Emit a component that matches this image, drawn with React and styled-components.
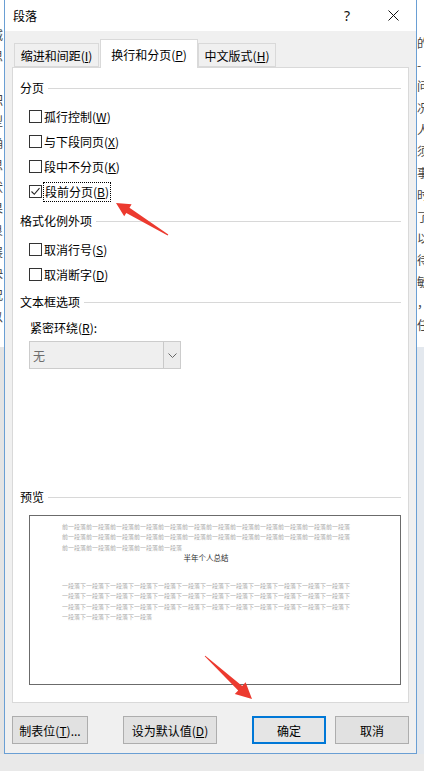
import React from 'react';
import styled, { createGlobalStyle } from 'styled-components';

const Global = createGlobalStyle`
  html, body { margin: 0; padding: 0; }
  body {
    background: #e9e9e9;
    font-family: "Noto Sans CJK SC", "Noto Sans", sans-serif;
    font-size: 12px;
    color: #000;
    overflow: hidden;
  }
`;

const Page = styled.div`
  position: relative;
  width: 424px;
  height: 771px;
  display: flex;
  flex-direction: column;
  background: #e9e9e9;
`;

const TopRow = styled.div`
  display: flex;
  height: 754px;
`;

const Strip = styled.div`
  width: ${p => p.$w}px;
  flex: none;
  display: flex;
  flex-direction: column;
  overflow: hidden;
`;

const DocPart = styled.div`
  height: 347px;
  flex: none;
  background: #fff;
  box-sizing: border-box;
  padding-top: ${p => p.$pt}px;
  display: flex;
  flex-direction: column;
  align-items: ${p => (p.$side === 'left' ? 'flex-end' : 'flex-start')};
  overflow: hidden;
`;

const DocChar = styled.div`
  flex: none;
  width: 13px;
  height: 21.7px;
  line-height: 21.7px;
  font-size: 12px;
  color: #444;
`;

const StripLower = styled.div`
  flex: 1;
  background: ${p => p.$bg};
`;

const Dialog = styled.div`
  width: 413px;
  flex: none;
  box-sizing: border-box;
  border: 1px solid #6a9fd4;
  border-top: none;
  background: #f0f0f0;
  display: flex;
  flex-direction: column;
`;

const TitleBar = styled.div`
  height: 31px;
  flex: none;
  background: #fff;
  display: flex;
  align-items: center;
  padding-left: 8px;
`;

const Title = styled.div`
  flex: 1;
  font-size: 12px;
  line-height: 16px;
`;

const TitleButton = styled.div`
  width: 46px;
  height: 31px;
  display: flex;
  align-items: center;
  justify-content: center;
  font-family: "Noto Sans", sans-serif;
  font-size: 14px;
  color: #111;
`;

const TabStrip = styled.div`
  height: 36px;
  flex: none;
  display: flex;
  align-items: flex-end;
  padding-left: 9px;
`;

const Tab = styled.div`
  position: relative;
  box-sizing: border-box;
  width: ${p => p.$w}px;
  height: ${p => (p.$active ? 29 : 24)}px;
  margin-bottom: ${p => (p.$active ? -1 : 0)}px;
  margin-right: ${p => (p.$active ? 0 : 1)}px;
  z-index: ${p => (p.$active ? 1 : 0)};
  padding-top: ${p => (p.$active ? 7 : 4)}px;
  border: 1px solid #d9d9d9;
  border-bottom: ${p => (p.$active ? 'none' : '1px solid #d9d9d9')};
  background: ${p => (p.$active ? '#fff' : '#f0f0f0')};
  text-align: center;
  font-size: 12px;
  line-height: 16px;
  white-space: nowrap;
`;

const Panel = styled.div`
  height: 636px;
  flex: none;
  margin: 0 7px;
  box-sizing: border-box;
  border: 1px solid #d9d9d9;
  background: #fff;
  padding: 0 7px;
  display: flex;
  flex-direction: column;
`;

const SectionHeader = styled.div`
  height: 16px;
  margin-top: ${p => p.$mt}px;
  display: flex;
  align-items: center;
  font-size: 12px;
  line-height: 16px;
  white-space: nowrap;
`;

const Rule = styled.div`
  flex: 1;
  height: 1px;
  margin-left: 4px;
  margin-top: 1px;
  background: #d8d8d8;
`;

const CheckList = styled.div`
  margin-top: ${p => p.$mt}px;
  margin-left: 9px;
  display: flex;
  flex-direction: column;
`;

const CheckRow = styled.div`
  height: 25px;
  display: flex;
  align-items: center;
`;

const Box = styled.div`
  width: 13px;
  height: 13px;
  box-sizing: border-box;
  border: 1px solid #333;
  background: #fff;
  flex: none;
  display: flex;
  align-items: center;
  justify-content: center;
`;

const Label = styled.span`
  margin-left: 1px;
  font-size: 12px;
  line-height: 16px;
  padding: 1px ${p => (p.$focus ? 1 : 0)}px;
  border: 1px ${p => (p.$focus ? 'dotted #000' : 'solid transparent')};
  white-space: nowrap;
`;

const FieldLabel = styled.div`
  margin-top: 10px;
  margin-left: 10px;
  height: 16px;
  font-size: 12px;
  line-height: 16px;
`;

const Select = styled.div`
  margin-top: 5px;
  margin-left: 9px;
  width: 152px;
  height: 28px;
  box-sizing: border-box;
  border: 1px solid #cccccc;
  background: #efefef;
  display: flex;
`;

const SelectValue = styled.div`
  flex: 1;
  padding-left: 3px;
  display: flex;
  align-items: center;
  color: #6d6d6d;
  font-size: 12px;
`;

const SelectButton = styled.div`
  width: 16px;
  border-left: 1px solid #c9c9c9;
  background: #ececec;
  display: flex;
  align-items: center;
  justify-content: center;
`;

const PreviewBox = styled.div`
  margin-top: 10px;
  margin-left: 9px;
  height: 170px;
  box-sizing: border-box;
  border: 1px solid #6b6b6b;
  background: #fff;
  padding: 6px 0 0 32px;
`;

const PreviewText = styled.div`
  width: 288px;
  font-size: 6px;
  line-height: 10.3px;
  color: ${p => (p.$dark ? '#2a2a2a' : '#acacac')};
  text-align: ${p => (p.$center ? 'center' : 'left')};
  margin-top: ${p => p.$mt || 0}px;
  word-break: break-all;
  ${p => p.$dark && 'font-size: 7.5px;'}
`;

const ButtonRow = styled.div`
  margin-top: 13px;
  padding: 0 7px;
  display: flex;
  height: 28px;
`;

const Button = styled.div`
  width: ${p => p.$w}px;
  margin-left: ${p => p.$ml || 0}px;
  box-sizing: border-box;
  border: 1px solid ${p => (p.$primary ? '#0078d7' : '#adadad')};
  box-shadow: ${p => (p.$primary ? 'inset 0 0 0 1px #0078d7' : 'none')};
  background: ${p => (p.$primary ? '#e5e5e5' : '#e1e1e1')};
  display: flex;
  align-items: center;
  justify-content: center;
  font-size: 12px;
  white-space: nowrap;
`;

const Spacer = styled.div`
  flex: 1;
`;

const Overlay = styled.svg`
  position: absolute;
  left: 0;
  top: 0;
  pointer-events: none;
`;

const leftChars = ['+', '城', '思', '、', '职', '型', '确', '思', '状', '果', '良', '展', '快', '况', '以'];
const rightChars = ['的', '-', '问', '况', '人', '须', '事', '时', '了', '以', '待', '敏', '，', '任'];

const Check = ({ checked }) => (
  <Box>
    {checked && (
      <svg width="11" height="11" viewBox="0 0 11 11">
        <path d="M1.5 5.5 L4.3 8.3 L9.5 2.2" fill="none" stroke="#222" strokeWidth="1.1" />
      </svg>
    )}
  </Box>
);

const CheckItem = ({ text, mn, checked, focus }) => (
  <CheckRow>
    <Check checked={checked} />
    <Label $focus={focus}>
      {text}(<u>{mn}</u>)
    </Label>
  </CheckRow>
);

export default function App() {
  const before = '前一段落'.repeat(29);
  const after = '下一段落'.repeat(40).slice(1);
  return (
    <>
      <Global />
      <Page>
        <TopRow>
          <Strip $w={4}>
            <DocPart $side="left" $pt={2}>
              {leftChars.map((c, i) => (
                <DocChar key={i}>{c}</DocChar>
              ))}
            </DocPart>
            <StripLower $bg="#e4e4e4" />
          </Strip>
          <Dialog>
            <TitleBar>
              <Title>段落</Title>
              <TitleButton>?</TitleButton>
              <TitleButton>
                <svg width="11" height="11" viewBox="0 0 11 11">
                  <path d="M0.5 0.5 L10.5 10.5 M10.5 0.5 L0.5 10.5" stroke="#111" strokeWidth="1" />
                </svg>
              </TitleButton>
            </TitleBar>
            <TabStrip>
              <Tab $w={85}>
                缩进和间距(<u>I</u>)
              </Tab>
              <Tab $w={98} $active>
                换行和分页(<u>P</u>)
              </Tab>
              <Tab $w={78}>
                中文版式(<u>H</u>)
              </Tab>
            </TabStrip>
            <Panel>
              <SectionHeader $mt={12}>
                分页
                <Rule />
              </SectionHeader>
              <CheckList $mt={8}>
                <CheckItem text="孤行控制" mn="W" />
                <CheckItem text="与下段同页" mn="X" />
                <CheckItem text="段中不分页" mn="K" />
                <CheckItem text="段前分页" mn="B" checked focus />
              </CheckList>
              <SectionHeader $mt={9}>
                格式化例外项
                <Rule />
              </SectionHeader>
              <CheckList $mt={8}>
                <CheckItem text="取消行号" mn="S" />
                <CheckItem text="取消断字" mn="D" />
              </CheckList>
              <SectionHeader $mt={7}>
                文本框选项
                <Rule />
              </SectionHeader>
              <FieldLabel>
                紧密环绕(<u>R</u>):
              </FieldLabel>
              <Select>
                <SelectValue>无</SelectValue>
                <SelectButton>
                  <svg width="9" height="5" viewBox="0 0 9 5">
                    <path d="M0.5 0.5 L4.5 4.5 L8.5 0.5" fill="none" stroke="#666" strokeWidth="1" />
                  </svg>
                </SelectButton>
              </Select>
              <SectionHeader $mt={120}>
                预览
                <Rule />
              </SectionHeader>
              <PreviewBox>
                <PreviewText>{before}</PreviewText>
                <PreviewText $dark $center>
                  半年个人总结
                </PreviewText>
                <PreviewText $mt={18}>{after}</PreviewText>
              </PreviewBox>
            </Panel>
            <ButtonRow>
              <Button $w={76}>
                制表位(<u>T</u>)...
              </Button>
              <Button $w={94} $ml={35}>
                设为默认值(<u>D</u>)
              </Button>
              <Spacer />
              <Button $w={74} $primary>
                确定
              </Button>
              <Button $w={74} $ml={9}>
                取消
              </Button>
            </ButtonRow>
          </Dialog>
          <Strip $w={7}>
            <DocPart $side="right" $pt={32}>
              {rightChars.map((c, i) => (
                <DocChar key={i}>{c}</DocChar>
              ))}
            </DocPart>
            <StripLower $bg="#e3e8ee" />
          </Strip>
        </TopRow>
        <Overlay width="424" height="771" viewBox="0 0 424 771">
          <polygon
            points="116,203 131.6,204.3 129.5,207.7 168.3,234.6 167.7,235.4 126.3,212.9 124.2,216.3"
            fill="#ec3a2f"
          />
          <polygon
            points="252,699 234.8,694.1 238.2,690.4 204.7,656.3 205.3,655.7 242.2,686 245.6,682.3"
            fill="#ec3a2f"
          />
        </Overlay>
      </Page>
    </>
  );
}
